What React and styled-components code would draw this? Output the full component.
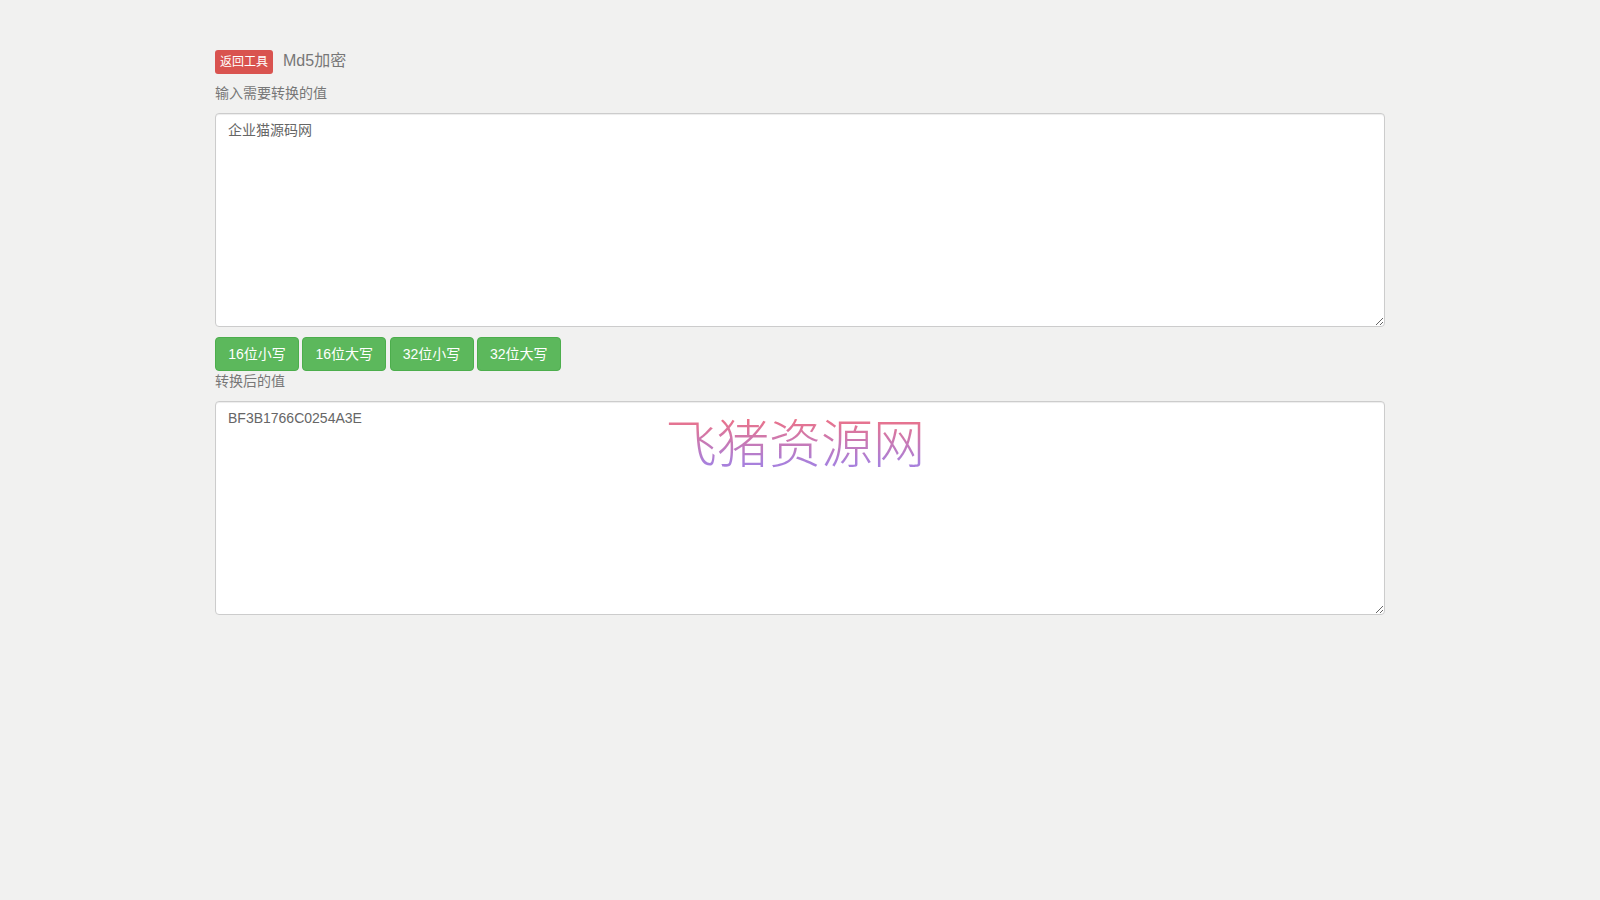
import styled, { createGlobalStyle } from "styled-components";

const GlobalStyle = createGlobalStyle`
  * {
    box-sizing: border-box;
  }

  html,
  body {
    margin: 0;
    background: #f1f1f0;
  }

  body {
    font-family: "Liberation Sans", "Noto Sans CJK SC", sans-serif;
    font-size: 14px;
    line-height: 20px;
    color: #777;
  }
`;

const Container = styled.div`
  position: relative;
  width: 1170px;
  margin: 0 auto;
  padding-top: 50px;
`;

const Heading = styled.div`
  display: flex;
  align-items: flex-start;
  gap: 10px;
  height: 24px;
  margin-bottom: 9px;
`;

const Badge = styled.a`
  display: block;
  width: 58px;
  height: 24px;
  border-radius: 3px;
  background: #d9534f;
  color: #fff;
  font-size: 12px;
  line-height: 24px;
  text-align: center;
`;

const Title = styled.span`
  font-size: 16px;
  line-height: 22px;
  color: #777;
`;

const Label = styled.p`
  margin: 0 0 10px;
  color: #777;
`;

const Field = styled.textarea`
  display: block;
  width: 100%;
  height: 214px;
  padding: 6px 12px;
  border: 1px solid #ccc;
  border-radius: 4px;
  background: #fff;
  box-shadow: inset 0 1px 1px rgba(0, 0, 0, 0.075);
  color: #666;
  font: inherit;
  outline: none;
  resize: both;
`;

const Buttons = styled.div`
  display: flex;
  gap: 3.25px;
  margin-top: 10px;
`;

const Button = styled.button`
  width: 84px;
  height: 34px;
  padding: 6px 0;
  border: 1px solid #4cae4c;
  border-radius: 4px;
  background: #5cb85c;
  color: #fff;
  font: inherit;
`;

const Watermark = styled.div`
  position: absolute;
  top: 409px;
  left: 450px;
  font-family: "Noto Sans CJK SC", serif;
  font-size: 52px;
  font-weight: 300;
  line-height: 64px;
  white-space: nowrap;
  background: linear-gradient(180deg, #ec7288 15%, #a880dc 85%);
  -webkit-background-clip: text;
  background-clip: text;
  color: transparent;
`;

const modes = ["16位小写", "16位大写", "32位小写", "32位大写"];

export default function App() {
  return (
    <>
      <GlobalStyle />
      <Container>
        <Heading>
          <Badge>返回工具</Badge>
          <Title>Md5加密</Title>
        </Heading>
        <Label>输入需要转换的值</Label>
        <Field defaultValue="企业猫源码网" />
        <Buttons>
          {modes.map((mode) => (
            <Button key={mode}>{mode}</Button>
          ))}
        </Buttons>
        <Label>转换后的值</Label>
        <Field defaultValue="BF3B1766C0254A3E" />
        <Watermark>飞猪资源网</Watermark>
      </Container>
    </>
  );
}
